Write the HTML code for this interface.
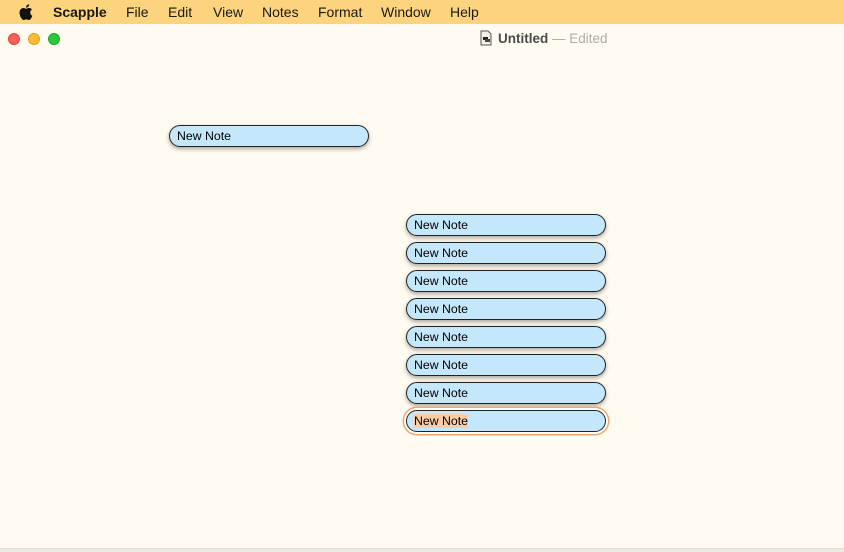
<!DOCTYPE html>
<html><head><meta charset="utf-8"><style>
*{margin:0;padding:0;box-sizing:border-box}
body{width:844px;height:552px;overflow:hidden;background:#fffbf0;font-family:"Liberation Sans",sans-serif;position:relative}
.menu{position:absolute;left:0;top:0;width:844px;height:24px;background:#fdd47e;font-size:14px;color:#1a1a1a}
.menu span{position:absolute;top:4px}
.win{position:absolute;left:0;top:24px;width:844px;height:524px;background:#fffbf0;border-top-left-radius:8px}
.dot{position:absolute;top:33px;width:12px;height:12px;border-radius:50%}
.title{position:absolute;top:31px;left:498px;font-size:13.5px;color:#4a4a4a;font-weight:bold}
.title i{font-style:normal;font-weight:normal;color:#b0aca4}
.note{position:absolute;width:200px;height:22px;border:1.5px solid #222;border-radius:11px;background:#c4e7fb;font-size:12.3px;color:#000;padding:3px 0 0 7px;box-shadow:0 2px 4px rgba(0,0,0,.35)}
.sel{outline:none;box-shadow:0 0 0 2px #fff,0 0 0 3.5px #f5a46c}
.sel b{font-weight:normal;background:#fccca5}
.bottom{position:absolute;left:0;top:548px;width:844px;height:4px;background:#eceae4;border-top:1px solid #dddad2}
</style></head><body>
<div class="menu">
<svg style="position:absolute;left:19px;top:4px" width="14" height="16" viewBox="0 0 14 16"><path d="M11.3 8.5c0-2 1.6-2.9 1.7-3-0.9-1.3-2.4-1.5-2.9-1.5-1.2-.1-2.4.7-3 .7s-1.6-.7-2.6-.7C3.200 4 1.900 4.800 1.200 6c-1.400 2.400-.4 6 1 8 .7 1 1.500 2 2.500 2s1.400-.6 2.600-.6 1.500.6 2.600.6 1.700-1 2.400-2c.7-1.100 1-2.200 1-2.300-.1 0-2-.8-2-3.200zM9.400 2.600C9.900 2 10.300 1.100 10.200.2c-.8 0-1.700.5-2.300 1.100-.5.600-.9 1.500-.8 2.300.9.100 1.700-.4 2.300-1z" fill="#111"/></svg>
<span style="left:53px;font-weight:bold">Scapple</span>
<span style="left:126px">File</span>
<span style="left:168px">Edit</span>
<span style="left:213px">View</span>
<span style="left:262px">Notes</span>
<span style="left:318px">Format</span>
<span style="left:381px">Window</span>
<span style="left:450px">Help</span>
</div>
<div class="win"></div>
<div class="dot" style="left:8px;background:#fe5f57;border:.5px solid #e0443e"></div>
<div class="dot" style="left:28px;background:#febc2e;border:.5px solid #dea123"></div>
<div class="dot" style="left:48px;background:#28c840;border:.5px solid #1aab29"></div>
<svg style="position:absolute;left:480px;top:30px" width="12" height="16" viewBox="0 0 12 16"><path d="M1 1h7l3 3v11H1z" fill="#f4f0e6" stroke="#555" stroke-width="1"/><rect x="3" y="7" width="5" height="3" fill="#222"/><rect x="5" y="9" width="5" height="3" fill="#444"/></svg>
<div class="title">Untitled <i>— Edited</i></div>
<div class="note" style="left:169px;top:125px">New Note</div>
<div class="note" style="left:406px;top:214px">New Note</div>
<div class="note" style="left:406px;top:242px">New Note</div>
<div class="note" style="left:406px;top:270px">New Note</div>
<div class="note" style="left:406px;top:298px">New Note</div>
<div class="note" style="left:406px;top:326px">New Note</div>
<div class="note" style="left:406px;top:354px">New Note</div>
<div class="note" style="left:406px;top:382px">New Note</div>
<div class="note sel" style="left:406px;top:410px"><b>New Note</b></div>
<div class="bottom"></div>
</body></html>
